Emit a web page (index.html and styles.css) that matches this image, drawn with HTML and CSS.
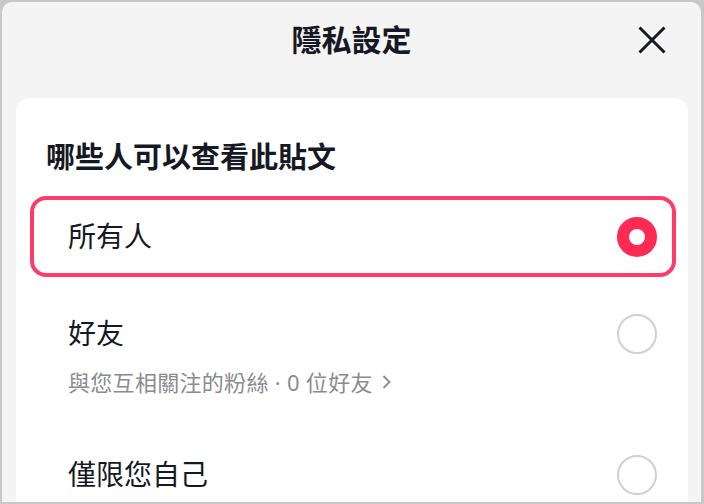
FILE: index.html
```html
<!DOCTYPE html>
<html lang="zh-Hant">
<head>
<meta charset="utf-8">
<title>隱私設定</title>
<link rel="stylesheet" href="styles.css">
</head>
<body>
<div class="sheet">
  <header class="header">
    <h1 class="title">隱私設定</h1>
    <button class="close" aria-label="關閉">
      <svg width="28" height="28" viewBox="0 0 28 28"><path d="M1.5 1.5 L26.5 26.5 M26.5 1.5 L1.5 26.5" stroke="#161823" stroke-width="3" stroke-linecap="butt" fill="none"/></svg>
    </button>
  </header>
  <section class="card">
    <h2 class="heading">哪些人可以查看此貼文</h2>
    <div class="option selected">
      <div class="main"><span class="label">所有人</span><span class="radio on"></span></div>
    </div>
    <div class="option">
      <div class="main"><span class="label">好友</span><span class="radio"></span></div>
      <div class="sub">與您互相關注的粉絲 · 0 位好友 <svg class="chev" width="9" height="16" viewBox="0 0 9 16"><path d="M1.5 2 L7.5 8 L1.5 14" stroke="#8a8b91" stroke-width="1.8" fill="none"/></svg></div>
    </div>
    <div class="option">
      <div class="main"><span class="label">僅限您自己</span><span class="radio"></span></div>
    </div>
  </section>
</div>
</body>
</html>
```
FILE: styles.css
```css
html, body {
  margin: 0;
  padding: 0;
  width: 704px;
  height: 504px;
  overflow: hidden;
  background: #c8c8c8;
}
body {
  font-family: "Noto Sans", "Noto Sans CJK TC", sans-serif;
  color: #161823;
}
.sheet {
  margin: 2px 3px 0 2px;
  height: 500px;
  background: #f4f4f4;
  border-radius: 10px 10px 0 0;
  overflow: hidden;
}
.header {
  height: 76px;
  display: grid;
  grid-template-columns: 1fr auto 1fr;
  align-items: center;
}
.title {
  grid-column: 2;
  margin: 0;
  font-size: 30px;
  font-weight: 700;
  line-height: 40px;
}
.close {
  justify-self: end;
  margin-right: 35px;
  padding: 0;
  border: 0;
  background: none;
  width: 28px;
  height: 28px;
  display: flex;
}
.card {
  margin: 20px 13px 0 14px;
  background: #fff;
  border-radius: 14px;
  padding: 41px 12px 20px 14px;
}
.heading {
  margin: 0 0 21px;
  padding-left: 16px;
  font-size: 29px;
  line-height: 36px;
  font-weight: 700;
}
.option {
  border: 4px solid transparent;
  border-radius: 16px;
  padding: 18px 15px 18px 34px;
}
.option.selected {
  border-color: #fe3b6b;
}
.option + .option {
  margin-top: 16px;
}
.main {
  display: flex;
  align-items: center;
  justify-content: space-between;
  height: 37px;
}
.label {
  font-size: 28px;
  line-height: 37px;
}
.radio {
  box-sizing: border-box;
  width: 40px;
  height: 40px;
  border-radius: 50%;
  border: 2.5px solid #d0d0d0;
  background: #fff;
}
.radio.on {
  border: 12px solid #fe2c55;
}
.sub {
  margin-top: 16px;
  font-size: 22px;
  line-height: 28px;
  color: #8a8b91;
  display: flex;
  align-items: center;
  white-space: pre;
  letter-spacing: 0.3px;
}
.chev {
  margin-left: 3px;
}
```
